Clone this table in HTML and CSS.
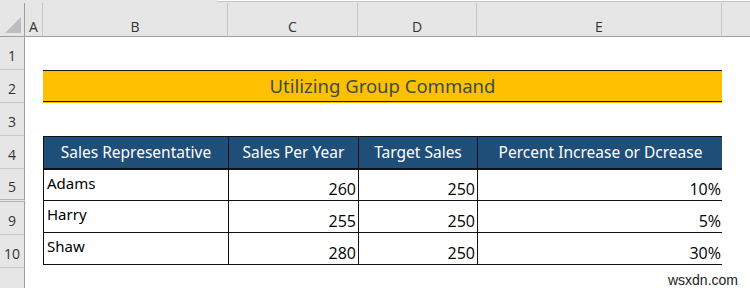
FILE: index.html
```html
<!DOCTYPE html>
<html>
<head>
<meta charset="utf-8">
<link rel="stylesheet" href="styles.css">
</head>
<body>
<div class="topbar"><div class="formula"></div></div>
<div class="sheet">
  <div class="corner"><svg class="tri" width="16" height="16" viewBox="0 0 16 16"><polygon points="16,0 16,16 0,16" fill="#bdbdbd"/></svg></div>
  <div class="colhead">A</div>
  <div class="colhead">B</div>
  <div class="colhead">C</div>
  <div class="colhead">D</div>
  <div class="colhead">E</div>
  <div class="colhead last"></div>

  <div class="rowhead">1</div>
  <div class="blank span6"></div>

  <div class="rowhead">2</div>
  <div class="blank"></div>
  <div class="title">Utilizing Group Command</div>
  <div class="blank"></div>

  <div class="rowhead">3</div>
  <div class="blank span6"></div>

  <div class="rowhead">4</div>
  <div class="blank"></div>
  <div class="tablewrap">
    <table class="data">
      <colgroup>
        <col class="cb"><col class="cc"><col class="cd"><col class="ce">
      </colgroup>
      <thead>
        <tr><th>Sales Representative</th><th>Sales Per Year</th><th>Target Sales</th><th>Percent Increase or Dcrease</th></tr>
      </thead>
      <tbody>
        <tr><td class="name">Adams</td><td class="num">260</td><td class="num">250</td><td class="num">10%</td></tr>
        <tr><td class="name">Harry</td><td class="num">255</td><td class="num">250</td><td class="num">5%</td></tr>
        <tr><td class="name">Shaw</td><td class="num">280</td><td class="num">250</td><td class="num">30%</td></tr>
      </tbody>
    </table>
  </div>
  <div class="blank"></div>

  <div class="rowhead hidden-below">5</div>
  <div class="blank"></div>
  <div class="blank"></div>

  <div class="rowhead">9</div>
  <div class="blank"></div>
  <div class="blank"></div>

  <div class="rowhead">10</div>
  <div class="blank"></div>
  <div class="blank"></div>

  <div class="rowhead last"></div>
  <div class="blank span6 footer"><span class="mark">wsxdn.com</span></div>
</div>
</body>
</html>
```

FILE: styles.css
```css
html, body {
  margin: 0;
  padding: 0;
  background: #ffffff;
}
body {
  width: 750px;
  height: 288px;
  overflow: hidden;
  font-family: "Noto Sans", sans-serif;
}
.topbar {
  height: 3px;
  background: #e6e6e6;
  display: flex;
  justify-content: flex-end;
}
.formula {
  width: 533px;
  height: 2px;
  background: #ffffff;
  border-bottom: 1px solid #c4c4c4;
  box-sizing: border-box;
}
.sheet {
  display: grid;
  grid-template-columns: 25px 18px 185px 130px 119px 245px 28px;
  grid-template-rows: 34px repeat(7, 33px) 20px;
}
.corner {
  background: #e6e6e6;
  border-bottom: 1px solid #9e9e9e;
  border-right: 1px solid #9e9e9e;
  box-sizing: border-box;
  display: flex;
  align-items: flex-end;
  justify-content: flex-end;
  padding: 0 3px 3px 0;
}
.tri { display: block; }
.colhead {
  background: #e6e6e6;
  border-bottom: 1px solid #9e9e9e;
  border-right: 1px solid #c6c6c6;
  box-sizing: border-box;
  font-family: "Open Sans", sans-serif;
  font-size: 14px;
  color: #333;
  display: flex;
  align-items: center;
  justify-content: center;
  padding-top: 14px;
}
.colhead.last { border-right: none; }
.rowhead {
  background: #e6e6e6;
  border-right: 1px solid #9e9e9e;
  border-bottom: 1px solid #c6c6c6;
  box-sizing: border-box;
  font-family: "Open Sans", sans-serif;
  font-size: 14px;
  color: #333;
  display: flex;
  align-items: center;
  justify-content: center;
  padding-top: 5px;
}
.rowhead.hidden-below {
  border-bottom: 3px double #b5b5b5;
}
.rowhead.last { border-bottom: none; }
.blank { background: #ffffff; }
.span6 { grid-column: span 6; }
.title {
  grid-column: span 4;
  background: #ffc000;
  border-top: 1px solid #1a1a1a;
  border-bottom: 3px double #1a1a1a;
  box-sizing: border-box;
  height: 34px;
  color: #3b4e4a;
  font-size: 18.5px;
  display: flex;
  align-items: center;
  justify-content: center;
  padding-bottom: 2px;
}
.tablewrap {
  grid-column: span 4;
  grid-row: span 4;
}
.data {
  border-collapse: collapse;
  table-layout: fixed;
  width: 680px;
}
.cb { width: 185px; }
.cc { width: 130px; }
.cd { width: 119px; }
.ce { width: 246px; }
.data th, .data td {
  border: 1px solid #111;
  height: 32px;
  padding: 0 3px;
  box-sizing: border-box;
  overflow: hidden;
  white-space: nowrap;
}
.data th {
  background: #1f4e79;
  color: #ffffff;
  font-weight: normal;
  font-size: 15.5px;
  text-align: center;
  border-bottom: 2px solid #111;
}
.data td.name {
  vertical-align: top;
  font-size: 15px;
  color: #000;
  padding-top: 3px;
}
.data td.num {
  vertical-align: bottom;
  text-align: right;
  font-family: "Open Sans", sans-serif;
  font-size: 16px;
  color: #000;
  padding-bottom: 0;
  padding-right: 2px;
}
.data tbody tr:first-child td { border-top: 2px solid #111; }
.footer {
  display: flex;
  justify-content: flex-end;
  align-items: flex-start;
}
.mark {
  font-family: "Liberation Sans", sans-serif;
  font-size: 14px;
  color: #222;
  margin-right: 12px;
  margin-top: 4px;
}
```
